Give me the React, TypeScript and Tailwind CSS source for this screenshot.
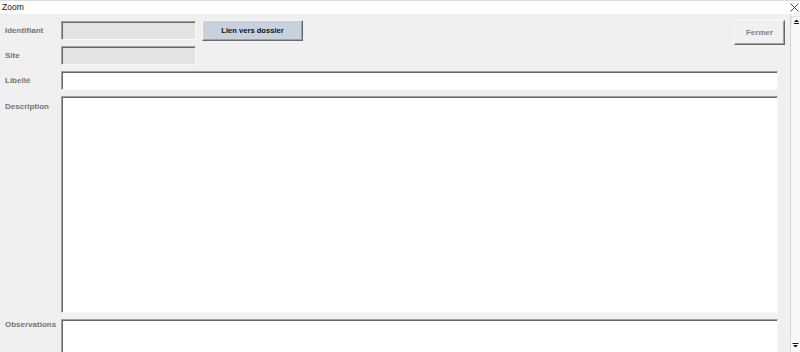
import React from 'react'

const sunken =
  'border border-t-[#a0a0a0] border-l-[#a0a0a0] border-b-[#f8f8f8] border-r-[#f8f8f8] shadow-[inset_1px_1px_0_#696969]'
const raised =
  'border border-t-[#f8f8f8] border-l-[#f8f8f8] border-b-[#696969] border-r-[#696969] shadow-[inset_-1px_-1px_0_#a0a0a0]'

const Label = ({ text, className = '' }: { text: string; className?: string }) => (
  <div className={`w-[61px] shrink-0 pl-[5px] text-[8px] font-bold text-[#747474] leading-none ${className}`}>
    {text}
  </div>
)

const App: React.FC = () => {
  return (
    <div
      className="w-[800px] h-[352px] overflow-hidden flex flex-col bg-[#f0f0f0]"
      style={{ fontFamily: '"Liberation Sans", Arial, sans-serif' }}
    >
      {/* Title bar */}
      <div className="h-[14px] shrink-0 bg-white border-t border-[#dcdcdc] flex items-center justify-between">
        <span className="pl-[2px] text-[8.5px] text-[#111] leading-none">Zoom</span>
        <svg width="9" height="9" viewBox="0 0 9 9" className="mr-[1px]">
          <path d="M0.5 0.5 L8.5 8.5 M8.5 0.5 L0.5 8.5" stroke="#333" strokeWidth="0.9" />
        </svg>
      </div>

      <div className="flex-1 flex min-h-0">
        {/* Form */}
        <div className="flex-1 flex flex-col gap-[6px] pt-[7px] pr-[12px] overflow-hidden">
          <div className="h-[19px] flex items-center shrink-0">
            <Label text="Identifiant" />
            <div className={`w-[135px] h-[19px] bg-[#e3e3e3] ${sunken}`} />
            <button
              className={`ml-[6px] w-[101px] h-[21px] bg-[#c7d2de] text-[7.6px] font-bold text-[#111] ${raised}`}
            >
              Lien vers dossier
            </button>
            <button
              className={`ml-auto -mr-[7px] self-start -mt-[1px] w-[51px] h-[25px] bg-[#f0f0f0] text-[8px] font-bold text-[#828282] ${raised}`}
            >
              Fermer
            </button>
          </div>

          <div className="h-[19px] flex items-center shrink-0">
            <Label text="Site" />
            <div className={`w-[135px] h-[19px] bg-[#e3e3e3] ${sunken}`} />
          </div>

          <div className="h-[19px] flex items-center shrink-0">
            <Label text="Libellé" />
            <div className={`flex-1 h-[19px] bg-white ${sunken}`} />
          </div>

          <div className="h-[217px] flex items-start shrink-0">
            <Label text="Description" className="mt-[7px]" />
            <div className={`flex-1 h-[217px] bg-white ${sunken}`} />
          </div>

          <div className="h-[60px] flex items-start shrink-0">
            <Label text="Observations" className="mt-[2px]" />
            <div className={`flex-1 h-[60px] bg-white ${sunken}`} />
          </div>
        </div>

        {/* Scrollbar */}
        <div className="w-[10px] shrink-0 flex flex-col justify-between border-l border-[#d6d6d6] bg-[#f7f7f7]">
          <div className="h-[10px] mt-[2px] flex items-center justify-center border-t border-l border-[#e2e2e2]">
            <svg width="7" height="5" viewBox="0 0 7 5">
              <path d="M3.5 0.5 L6 3 L1 3 Z" fill="#111" />
              <rect x="1" y="4" width="5" height="1" fill="#111" />
            </svg>
          </div>
          <div className="h-[10px] mb-[2px] flex items-center justify-center bg-white">
            <svg width="7" height="5" viewBox="0 0 7 5">
              <rect x="0.5" y="0" width="6" height="1" fill="#111" />
              <path d="M1 2 L6 2 L3.5 4.5 Z" fill="#111" />
            </svg>
          </div>
        </div>
      </div>
    </div>
  )
}

export default App
